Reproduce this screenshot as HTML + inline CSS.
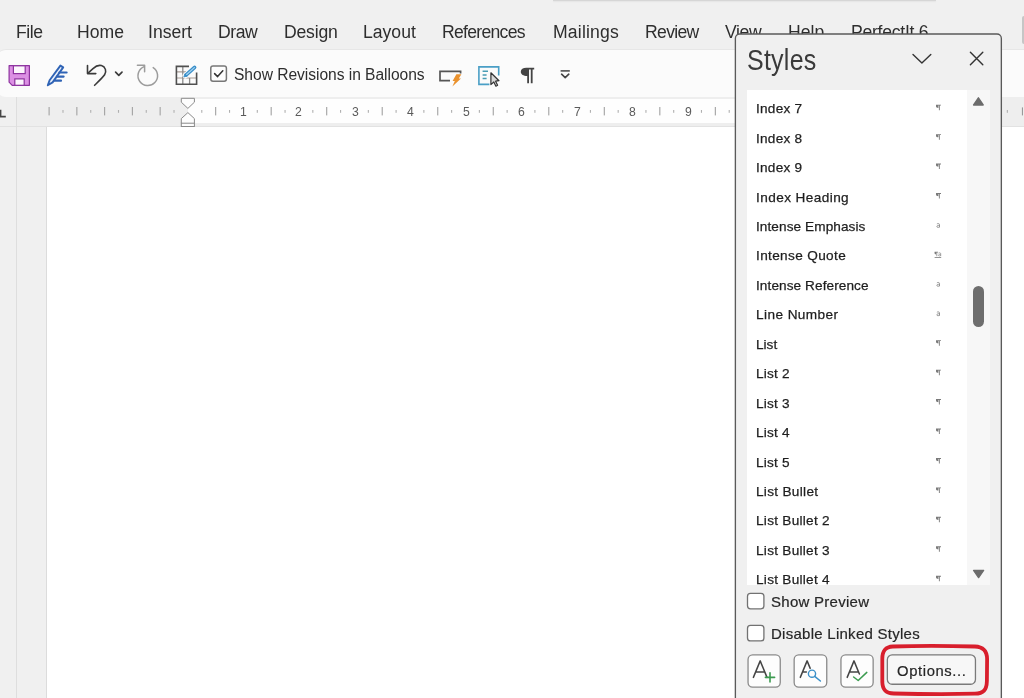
<!DOCTYPE html>
<html lang="en">
<head>
<meta charset="utf-8">
<title>Styles pane</title>
<style>
html,body{margin:0;padding:0;}
body{width:1024px;height:698px;overflow:hidden;background:#f0f0f0;position:relative;font-family:"Liberation Sans",sans-serif;}
.t{position:absolute;white-space:nowrap;line-height:1;will-change:transform;font-family:"Liberation Sans",sans-serif;}
svg.layer{position:absolute;left:0;top:0;width:1024px;height:698px;overflow:hidden;}
#toolbar{position:absolute;box-sizing:border-box;left:-4px;top:49px;width:1034px;height:48px;background:#fbfbfb;border-top:1px solid #e7e7e7;border-radius:10px 0 0 10px;}
#rulergray{position:absolute;left:17px;top:97px;width:1007px;height:29px;background:#eeeeee;}
#rulerwhite{position:absolute;left:187.5px;top:99px;width:800px;height:24px;background:#fefefe;}
#rulerline{position:absolute;left:0;top:125.6px;width:1024px;height:1.2px;background:#e2e2e2;}
#vline{position:absolute;left:16.1px;top:97px;width:1.2px;height:601px;background:#dedede;}
#page{position:absolute;left:46.4px;top:127px;width:978px;height:571px;background:#fff;border-left:1px solid #dcdcdc;}
#topstrip{position:absolute;left:553px;top:0;width:383px;height:1.3px;background:#d6d6d6;box-shadow:0 1px 1.5px rgba(0,0,0,0.06);}
#topbtn{position:absolute;left:1022.3px;top:15.7px;width:4px;height:28.5px;background:#c6c6c6;border-radius:2px;}
#list{position:absolute;left:747px;top:90px;width:243px;height:494.8px;background:#fff;}
#track{position:absolute;left:967px;top:90px;width:23px;height:494.8px;background:#f7f7f7;}
#thumb{position:absolute;left:972.6px;top:286px;width:11.8px;height:40.5px;background:#6e6e6e;border-radius:6px;}
</style>
</head>
<body>
<div id="topstrip"></div>
<div id="topbtn"></div>
<div id="toolbar"></div>
<div id="rulergray"></div>
<div id="rulerwhite"></div>
<div id="rulerline"></div>
<div id="vline"></div>
<div id="page"></div>

<svg class="layer" viewBox="0 0 1024 698">
<!-- ruler ticks -->
<rect x="48.55" y="107" width="1.1" height="8.4" fill="#a2a2a2"/>
<rect x="62.43" y="110" width="1.1" height="2.8" fill="#b0b0b0"/>
<rect x="76.31" y="107" width="1.1" height="8.4" fill="#a2a2a2"/>
<rect x="90.19" y="110" width="1.1" height="2.8" fill="#b0b0b0"/>
<rect x="104.07" y="107" width="1.1" height="8.4" fill="#a2a2a2"/>
<rect x="117.95" y="110" width="1.1" height="2.8" fill="#b0b0b0"/>
<rect x="131.83" y="107" width="1.1" height="8.4" fill="#a2a2a2"/>
<rect x="145.71" y="110" width="1.1" height="2.8" fill="#b0b0b0"/>
<rect x="159.59" y="107" width="1.1" height="8.4" fill="#a2a2a2"/>
<rect x="173.47" y="110" width="1.1" height="2.8" fill="#b0b0b0"/>
<rect x="201.23" y="110" width="1.1" height="2.8" fill="#b0b0b0"/>
<rect x="215.11" y="107" width="1.1" height="8.4" fill="#a2a2a2"/>
<rect x="228.99" y="110" width="1.1" height="2.8" fill="#b0b0b0"/>
<rect x="256.75" y="110" width="1.1" height="2.8" fill="#b0b0b0"/>
<rect x="270.63" y="107" width="1.1" height="8.4" fill="#a2a2a2"/>
<rect x="284.51" y="110" width="1.1" height="2.8" fill="#b0b0b0"/>
<rect x="312.27" y="110" width="1.1" height="2.8" fill="#b0b0b0"/>
<rect x="326.15" y="107" width="1.1" height="8.4" fill="#a2a2a2"/>
<rect x="340.03" y="110" width="1.1" height="2.8" fill="#b0b0b0"/>
<rect x="367.79" y="110" width="1.1" height="2.8" fill="#b0b0b0"/>
<rect x="381.67" y="107" width="1.1" height="8.4" fill="#a2a2a2"/>
<rect x="395.55" y="110" width="1.1" height="2.8" fill="#b0b0b0"/>
<rect x="423.31" y="110" width="1.1" height="2.8" fill="#b0b0b0"/>
<rect x="437.19" y="107" width="1.1" height="8.4" fill="#a2a2a2"/>
<rect x="451.07" y="110" width="1.1" height="2.8" fill="#b0b0b0"/>
<rect x="478.83" y="110" width="1.1" height="2.8" fill="#b0b0b0"/>
<rect x="492.71" y="107" width="1.1" height="8.4" fill="#a2a2a2"/>
<rect x="506.59" y="110" width="1.1" height="2.8" fill="#b0b0b0"/>
<rect x="534.35" y="110" width="1.1" height="2.8" fill="#b0b0b0"/>
<rect x="548.23" y="107" width="1.1" height="8.4" fill="#a2a2a2"/>
<rect x="562.11" y="110" width="1.1" height="2.8" fill="#b0b0b0"/>
<rect x="589.87" y="110" width="1.1" height="2.8" fill="#b0b0b0"/>
<rect x="603.75" y="107" width="1.1" height="8.4" fill="#a2a2a2"/>
<rect x="617.63" y="110" width="1.1" height="2.8" fill="#b0b0b0"/>
<rect x="645.39" y="110" width="1.1" height="2.8" fill="#b0b0b0"/>
<rect x="659.27" y="107" width="1.1" height="8.4" fill="#a2a2a2"/>
<rect x="673.15" y="110" width="1.1" height="2.8" fill="#b0b0b0"/>
<rect x="700.91" y="110" width="1.1" height="2.8" fill="#b0b0b0"/>
<rect x="714.79" y="107" width="1.1" height="8.4" fill="#a2a2a2"/>
<rect x="728.67" y="110" width="1.1" height="2.8" fill="#b0b0b0"/>
<rect x="756.43" y="110" width="1.1" height="2.8" fill="#b0b0b0"/>
<rect x="770.31" y="107" width="1.1" height="8.4" fill="#a2a2a2"/>
<rect x="784.19" y="110" width="1.1" height="2.8" fill="#b0b0b0"/>
<rect x="811.95" y="110" width="1.1" height="2.8" fill="#b0b0b0"/>
<rect x="825.83" y="107" width="1.1" height="8.4" fill="#a2a2a2"/>
<rect x="839.71" y="110" width="1.1" height="2.8" fill="#b0b0b0"/>
<rect x="867.47" y="110" width="1.1" height="2.8" fill="#b0b0b0"/>
<rect x="881.35" y="107" width="1.1" height="8.4" fill="#a2a2a2"/>
<rect x="895.23" y="110" width="1.1" height="2.8" fill="#b0b0b0"/>
<rect x="922.99" y="110" width="1.1" height="2.8" fill="#b0b0b0"/>
<rect x="936.87" y="107" width="1.1" height="8.4" fill="#a2a2a2"/>
<rect x="950.75" y="110" width="1.1" height="2.8" fill="#b0b0b0"/>
<rect x="978.51" y="110" width="1.1" height="2.8" fill="#b0b0b0"/>
<rect x="992.39" y="107" width="1.1" height="8.4" fill="#a2a2a2"/>
<rect x="1006.8" y="110" width="1.1" height="2.8" fill="#b0b0b0"/><rect x="1021.9" y="107.4" width="1.1" height="8" fill="#999"/>
<!-- tab selector L -->
<path d="M0.5 109.8V116.6H5.8" fill="none" stroke="#444" stroke-width="1.8"/>
<!-- indent markers -->
<path d="M181.3 98.3H194.4V102.2L187.9 108.4L181.3 102.2Z" fill="#fdfdfd" stroke="#8a8a8a" stroke-width="1"/>
<path d="M181.3 123.2V118.6L187.9 112.6L194.4 118.6V123.2" fill="#fdfdfd" stroke="#8a8a8a" stroke-width="1"/>
<rect x="181.3" y="123.2" width="13.1" height="3.3" fill="#fdfdfd" stroke="#8a8a8a" stroke-width="1"/>

<!-- save icon -->
<path d="M9.1 65.6H29.4V85.3H12.2L9.1 82.2Z" fill="#dc90e4" stroke="#8d329f" stroke-width="1.2" stroke-linejoin="round"/>
<rect x="13.4" y="65.8" width="11.8" height="7.8" fill="#fcf6fd" stroke="#8d329f" stroke-width="1.2"/>
<rect x="14.8" y="78.9" width="9.4" height="6.4" fill="#fcf6fd" stroke="#8d329f" stroke-width="1.2"/>

<!-- quill pen icon -->
<g fill="none" stroke="#2f63b5" stroke-linecap="round" stroke-linejoin="round">
<path d="M47.8 85.2L49.6 80.2L60.4 65.6L63.2 67.4L52.6 82.4Z" stroke-width="1.9" fill="#e9f0fb"/>
<path d="M59.4 72.5H66.6M57 76.6H63.6M54.6 80.7H61" stroke-width="2.2"/>
</g>

<!-- undo -->
<path d="M87.5 65.6V73.6H95.8" fill="none" stroke="#3b3b3b" stroke-width="1.6" stroke-linecap="round" stroke-linejoin="round"/>
<path d="M88 73.2L93 68.6C95.6 66.2 98.8 64.9 101.4 65.6C105.6 66.8 106.8 71.4 104.6 74.8C103.2 77 99 81 94.6 85.3" fill="none" stroke="#3b3b3b" stroke-width="1.6" stroke-linecap="round"/>
<path d="M115.6 72.2L118.8 75.3L122 72.2" fill="none" stroke="#3b3b3b" stroke-width="1.7" stroke-linecap="round" stroke-linejoin="round"/>

<!-- redo (disabled) -->
<path d="M143.6 66.9A9.8 9.8 0 1 0 153.2 67.6" fill="none" stroke="#9c9c9c" stroke-width="1.5" stroke-linecap="round"/>
<path d="M137.4 65.2H144.6V71.8" fill="none" stroke="#9c9c9c" stroke-width="1.5" stroke-linecap="round" stroke-linejoin="round"/>

<!-- table with pen -->
<g fill="none">
<path d="M176.4 71.8H186M176.4 78H196.6" stroke="#a89c96" stroke-width="1.2"/>
<path d="M182.8 66.4V84.2M189.6 78V84.2" stroke="#8a8a8a" stroke-width="1.3"/>
<path d="M189 66.4H176.4V84.2H196.6V72.4" stroke="#505050" stroke-width="1.6"/>
</g>
<path d="M185.2 75.8L194.8 67.2" fill="none" stroke="#fbfbfb" stroke-width="5.4" stroke-linecap="round"/>
<path d="M186.2 74.9L194.6 67.4" fill="none" stroke="#3b8fc9" stroke-width="3.6" stroke-linecap="round"/>
<path d="M186.6 74.5L194.4 67.6" fill="none" stroke="#a4d4f2" stroke-width="1.2" stroke-linecap="round"/>
<path d="M183.8 77L184.9 73.9L187.2 76Z" fill="#3b8fc9" stroke="#3b8fc9" stroke-width="0.8" stroke-linejoin="round"/>

<!-- checkbox (toolbar) -->
<rect x="210.8" y="65.9" width="15.6" height="15.3" rx="2.2" fill="#fdfdfd" stroke="#777" stroke-width="1.5"/>
<path d="M214.6 73.6L217.6 76.6L222.8 70.8" fill="none" stroke="#333" stroke-width="1.5" stroke-linecap="round" stroke-linejoin="round"/>

<!-- balloon lightning -->
<path d="M450 80.6H440V71.4H460.6V73.4" fill="none" stroke="#555" stroke-width="1.7"/>
<path d="M456.4 74.2H461.4L458.8 78.6H461L452.4 86.4L454.8 80.9H452.6Z" fill="#ea922e"/>

<!-- select objects -->
<path d="M489.4 84.4H478.9V66.9H498.7V75.6" fill="none" stroke="#4a9fc6" stroke-width="1.6"/>
<path d="M482.6 71.3H488M482.6 74.9H486.6M482.6 78.5H486.6" fill="none" stroke="#4a9db5" stroke-width="1.5"/>
<path d="M490.9 72.8V84.6L493.8 82L495.9 86.2L497.6 85.3L495.6 81.2L499 80.7Z" fill="#d8d8d8" stroke="#333" stroke-width="1.2" stroke-linejoin="round"/>

<!-- pilcrow -->
<path d="M534.2 67.8V69.4H532.6V83.2H530.8V69.4H529V83.2H527.2V76C523.4 76 520.8 74.6 520.8 71.8C520.8 69.2 523 67.8 526.4 67.8Z" fill="#444"/>

<!-- customize qat -->
<path d="M560.6 70.9H569.8" fill="none" stroke="#444" stroke-width="1.5"/>
<path d="M561.6 74.2L565.2 77.6L568.8 74.2" fill="none" stroke="#444" stroke-width="1.6" stroke-linecap="round" stroke-linejoin="round"/>
</svg>

<span class="t" style="left:15.60px;top:24.00px;font-size:17.6px;letter-spacing:-0.466px;color:#2e2e2e;">File</span>
<span class="t" style="left:77.00px;top:24.00px;font-size:17.6px;letter-spacing:0.0px;color:#2e2e2e;">Home</span>
<span class="t" style="left:148.00px;top:24.00px;font-size:17.6px;letter-spacing:0.0px;color:#2e2e2e;">Insert</span>
<span class="t" style="left:218.20px;top:24.00px;font-size:17.6px;letter-spacing:-0.433px;color:#2e2e2e;">Draw</span>
<span class="t" style="left:284.10px;top:24.00px;font-size:17.6px;letter-spacing:-0.2px;color:#2e2e2e;">Design</span>
<span class="t" style="left:362.60px;top:24.00px;font-size:17.6px;letter-spacing:0.0px;color:#2e2e2e;">Layout</span>
<span class="t" style="left:441.90px;top:24.00px;font-size:17.6px;letter-spacing:-0.711px;color:#2e2e2e;">References</span>
<span class="t" style="left:552.60px;top:24.00px;font-size:17.6px;letter-spacing:0.186px;color:#2e2e2e;">Mailings</span>
<span class="t" style="left:645.00px;top:24.00px;font-size:17.6px;letter-spacing:-0.68px;color:#2e2e2e;">Review</span>
<span class="t" style="left:725.20px;top:24.00px;font-size:17.6px;letter-spacing:-0.4px;color:#2e2e2e;">View</span>
<span class="t" style="left:788.00px;top:24.00px;font-size:17.6px;letter-spacing:0.0px;color:#2e2e2e;">Help</span>
<span class="t" style="left:851.30px;top:24.00px;font-size:17.6px;letter-spacing:-0.26px;color:#2e2e2e;">PerfectIt 6</span>
<span class="t" style="left:233.90px;top:67.19px;font-size:15.6px;letter-spacing:-0.036px;color:#2e2e2e;">Show Revisions in Balloons</span>
<span class="t" style="left:239.72px;top:106.27px;font-size:12.2px;letter-spacing:0.0px;color:#5a5a5a;">1</span>
<span class="t" style="left:295.24px;top:106.27px;font-size:12.2px;letter-spacing:0.0px;color:#5a5a5a;">2</span>
<span class="t" style="left:351.76px;top:106.27px;font-size:12.2px;letter-spacing:0.0px;color:#5a5a5a;">3</span>
<span class="t" style="left:407.28px;top:106.27px;font-size:12.2px;letter-spacing:0.0px;color:#5a5a5a;">4</span>
<span class="t" style="left:462.80px;top:106.27px;font-size:12.2px;letter-spacing:0.0px;color:#5a5a5a;">5</span>
<span class="t" style="left:518.32px;top:106.27px;font-size:12.2px;letter-spacing:0.0px;color:#5a5a5a;">6</span>
<span class="t" style="left:573.84px;top:106.27px;font-size:12.2px;letter-spacing:0.0px;color:#5a5a5a;">7</span>
<span class="t" style="left:629.36px;top:106.27px;font-size:12.2px;letter-spacing:0.0px;color:#5a5a5a;">8</span>
<span class="t" style="left:684.88px;top:106.27px;font-size:12.2px;letter-spacing:0.0px;color:#5a5a5a;">9</span>

<svg class="layer" viewBox="0 0 1024 698"><rect x="735.38" y="34" width="265.97" height="700" rx="4.4" fill="#f0f0f0" stroke="#5a5a5a" stroke-width="1.35"/></svg>
<div id="list"></div>
<div id="track"></div>
<div id="thumb"></div>

<svg class="layer" viewBox="0 0 1024 698">
<!-- checkboxes & buttons -->
<rect x="747.5" y="593.3" width="16.4" height="15.5" rx="3" fill="#fff" stroke="#727272" stroke-width="1.3"/>
<rect x="747.5" y="625.4" width="16.4" height="15.5" rx="3" fill="#fff" stroke="#727272" stroke-width="1.3"/>
<rect x="748.05" y="654.85" width="32.2" height="32.2" rx="4.6" fill="#fdfdfd" stroke="#8a8a8a" stroke-width="1.3"/>
<rect x="794.15" y="654.85" width="32.6" height="32.2" rx="4.6" fill="#fdfdfd" stroke="#8a8a8a" stroke-width="1.3"/>
<rect x="840.95" y="654.85" width="32.2" height="32.2" rx="4.6" fill="#fdfdfd" stroke="#8a8a8a" stroke-width="1.3"/>
<rect x="887.35" y="654.85" width="88.1" height="29.4" rx="4.8" fill="#f7f7f7" stroke="#7a7a7a" stroke-width="1.3"/>
<!-- chevron / close -->
<path d="M913 54.6L921.9 63L930.8 54.6" fill="none" stroke="#333" stroke-width="1.4" stroke-linecap="round" stroke-linejoin="round"/>
<path d="M970.4 52.2L982.8 64.8M982.8 52.2L970.4 64.8" fill="none" stroke="#333" stroke-width="1.4" stroke-linecap="round"/>
<!-- scroll arrows -->
<path d="M973.6 105L978.4 97.8L983.2 105Z" fill="#6c6c6c" stroke="#6c6c6c" stroke-width="1.4" stroke-linejoin="round"/>
<path d="M973.6 570.4L978.6 577.6L983.6 570.4Z" fill="#6c6c6c" stroke="#6c6c6c" stroke-width="1.4" stroke-linejoin="round"/>
<!-- style type glyphs -->
<path transform="translate(935.8,104.7)" d="M0.2 0h5v0.9h-1.2v4.6h-0.9v-4.6h-0.5v2.3c-1.5 0-2.4-0.6-2.4-1.7z" fill="#7a7a7a"/>
<path transform="translate(935.8,134.14)" d="M0.2 0h5v0.9h-1.2v4.6h-0.9v-4.6h-0.5v2.3c-1.5 0-2.4-0.6-2.4-1.7z" fill="#7a7a7a"/>
<path transform="translate(935.8,163.58)" d="M0.2 0h5v0.9h-1.2v4.6h-0.9v-4.6h-0.5v2.3c-1.5 0-2.4-0.6-2.4-1.7z" fill="#7a7a7a"/>
<path transform="translate(935.8,193.02)" d="M0.2 0h5v0.9h-1.2v4.6h-0.9v-4.6h-0.5v2.3c-1.5 0-2.4-0.6-2.4-1.7z" fill="#7a7a7a"/>
<path transform="translate(936.4,222.76)" d="M0.5 1.2c0.5-0.5 2.6-0.7 2.6 0.6v2.9M3.1 2.6c-1.4 0-2.6 0.1-2.6 1.2c0 1.1 1.9 1.1 2.6 0.1" fill="none" stroke="#858585" stroke-width="0.85"/>
<g transform="translate(934.6,251.8)"><path d="M0 0h3.4v0.8h-0.8v3.6h-0.7v-3.6h-0.4v1.8c-1 0-1.6-0.5-1.6-1.3z" fill="#7a7a7a"/><path d="M3.9 1.3c0.4-0.4 2.2-0.6 2.2 0.5v2.6M6.1 2.5c-1.2 0-2.2 0.1-2.2 1c0 0.9 1.6 0.9 2.2 0.1" fill="none" stroke="#858585" stroke-width="0.7"/><rect x="0" y="5.3" width="6.6" height="0.8" fill="#7a7a7a"/></g>
<path transform="translate(936.4,281.64)" d="M0.5 1.2c0.5-0.5 2.6-0.7 2.6 0.6v2.9M3.1 2.6c-1.4 0-2.6 0.1-2.6 1.2c0 1.1 1.9 1.1 2.6 0.1" fill="none" stroke="#858585" stroke-width="0.85"/>
<path transform="translate(936.4,311.08)" d="M0.5 1.2c0.5-0.5 2.6-0.7 2.6 0.6v2.9M3.1 2.6c-1.4 0-2.6 0.1-2.6 1.2c0 1.1 1.9 1.1 2.6 0.1" fill="none" stroke="#858585" stroke-width="0.85"/>
<path transform="translate(935.8,340.22)" d="M0.2 0h5v0.9h-1.2v4.6h-0.9v-4.6h-0.5v2.3c-1.5 0-2.4-0.6-2.4-1.7z" fill="#7a7a7a"/>
<path transform="translate(935.8,369.66)" d="M0.2 0h5v0.9h-1.2v4.6h-0.9v-4.6h-0.5v2.3c-1.5 0-2.4-0.6-2.4-1.7z" fill="#7a7a7a"/>
<path transform="translate(935.8,399.1)" d="M0.2 0h5v0.9h-1.2v4.6h-0.9v-4.6h-0.5v2.3c-1.5 0-2.4-0.6-2.4-1.7z" fill="#7a7a7a"/>
<path transform="translate(935.8,428.54)" d="M0.2 0h5v0.9h-1.2v4.6h-0.9v-4.6h-0.5v2.3c-1.5 0-2.4-0.6-2.4-1.7z" fill="#7a7a7a"/>
<path transform="translate(935.8,457.98)" d="M0.2 0h5v0.9h-1.2v4.6h-0.9v-4.6h-0.5v2.3c-1.5 0-2.4-0.6-2.4-1.7z" fill="#7a7a7a"/>
<path transform="translate(935.8,487.42)" d="M0.2 0h5v0.9h-1.2v4.6h-0.9v-4.6h-0.5v2.3c-1.5 0-2.4-0.6-2.4-1.7z" fill="#7a7a7a"/>
<path transform="translate(935.8,516.86)" d="M0.2 0h5v0.9h-1.2v4.6h-0.9v-4.6h-0.5v2.3c-1.5 0-2.4-0.6-2.4-1.7z" fill="#7a7a7a"/>
<path transform="translate(935.8,546.3)" d="M0.2 0h5v0.9h-1.2v4.6h-0.9v-4.6h-0.5v2.3c-1.5 0-2.4-0.6-2.4-1.7z" fill="#7a7a7a"/>
<path transform="translate(935.8,575.74)" d="M0.2 0h5v0.9h-1.2v4.6h-0.9v-4.6h-0.5v2.3c-1.5 0-2.4-0.6-2.4-1.7z" fill="#7a7a7a"/>
<!-- A+ -->
<g fill="none" stroke="#444" stroke-width="1.5" stroke-linecap="round" stroke-linejoin="round">
<path d="M753.4 677.4L760.2 660.9L767 677.4M755.8 671.9H764.6"/>
<path d="M800.3 677.4L807.1 660.9L810.2 668.4M802.6 671.9H806.4"/>
<path d="M847.2 677.4L854 660.9L859.4 674M849.6 671.9H858.4"/>
</g>
<path d="M770 672.8V682M765.4 677.4H774.6" fill="none" stroke="#3c9b50" stroke-width="1.6" stroke-linecap="round"/>
<circle cx="812" cy="673.7" r="3.6" fill="none" stroke="#3a8fc8" stroke-width="1.4"/>
<path d="M814.7 676.4L820.4 681" fill="none" stroke="#3a8fc8" stroke-width="1.5" stroke-linecap="round"/>
<path d="M853.6 677L858.2 680.5L866.8 672.4" fill="none" stroke="#3c9b50" stroke-width="1.5" stroke-linecap="round" stroke-linejoin="round"/>
<!-- red highlight -->
<path d="M893 645.6C920 644.8 950 645 975 645.6C983.6 646 987 650 987.2 658L987 680C986.8 689 983.6 692.6 975 692.8C950 693.4 920 693.2 894 692.6C886 692.4 882.6 689 882.4 681L882.4 658C882.4 650 885.4 646 893 645.6Z" fill="none" stroke="#d81e2c" stroke-width="3.8" stroke-linejoin="round" transform="translate(-0.1,0.9)"/>
</svg>

<span class="t" style="left:747.20px;top:48.54px;font-size:25px;letter-spacing:0.24px;color:#3a3a3a;transform:scaleY(1.18);transform-origin:0 84.65%;">Styles</span>
<span class="t" style="left:755.90px;top:101.79px;font-size:13.6px;letter-spacing:0.25px;color:#1e1e1e;-webkit-text-stroke:0.25px #1e1e1e;">Index 7</span>
<span class="t" style="left:755.90px;top:132.23px;font-size:13.6px;letter-spacing:0.25px;color:#1e1e1e;-webkit-text-stroke:0.25px #1e1e1e;">Index 8</span>
<span class="t" style="left:755.90px;top:160.67px;font-size:13.6px;letter-spacing:0.25px;color:#1e1e1e;-webkit-text-stroke:0.25px #1e1e1e;">Index 9</span>
<span class="t" style="left:755.90px;top:191.11px;font-size:13.6px;letter-spacing:0.417px;color:#1e1e1e;-webkit-text-stroke:0.25px #1e1e1e;">Index Heading</span>
<span class="t" style="left:755.90px;top:219.55px;font-size:13.6px;letter-spacing:0.087px;color:#1e1e1e;-webkit-text-stroke:0.25px #1e1e1e;">Intense Emphasis</span>
<span class="t" style="left:755.90px;top:248.99px;font-size:13.6px;letter-spacing:0.358px;color:#1e1e1e;-webkit-text-stroke:0.25px #1e1e1e;">Intense Quote</span>
<span class="t" style="left:755.90px;top:279.43px;font-size:13.6px;letter-spacing:0.088px;color:#1e1e1e;-webkit-text-stroke:0.25px #1e1e1e;">Intense Reference</span>
<span class="t" style="left:755.90px;top:307.87px;font-size:13.6px;letter-spacing:0.43px;color:#1e1e1e;-webkit-text-stroke:0.25px #1e1e1e;">Line Number</span>
<span class="t" style="left:755.90px;top:338.31px;font-size:13.6px;letter-spacing:0.0px;color:#1e1e1e;-webkit-text-stroke:0.25px #1e1e1e;">List</span>
<span class="t" style="left:755.90px;top:366.75px;font-size:13.6px;letter-spacing:0.2px;color:#1e1e1e;-webkit-text-stroke:0.25px #1e1e1e;">List 2</span>
<span class="t" style="left:755.90px;top:397.19px;font-size:13.6px;letter-spacing:0.2px;color:#1e1e1e;-webkit-text-stroke:0.25px #1e1e1e;">List 3</span>
<span class="t" style="left:755.90px;top:425.63px;font-size:13.6px;letter-spacing:0.2px;color:#1e1e1e;-webkit-text-stroke:0.25px #1e1e1e;">List 4</span>
<span class="t" style="left:755.90px;top:456.07px;font-size:13.6px;letter-spacing:0.2px;color:#1e1e1e;-webkit-text-stroke:0.25px #1e1e1e;">List 5</span>
<span class="t" style="left:755.90px;top:484.51px;font-size:13.6px;letter-spacing:0.31px;color:#1e1e1e;-webkit-text-stroke:0.25px #1e1e1e;">List Bullet</span>
<span class="t" style="left:755.90px;top:513.95px;font-size:13.6px;letter-spacing:0.275px;color:#1e1e1e;-webkit-text-stroke:0.25px #1e1e1e;">List Bullet 2</span>
<span class="t" style="left:755.90px;top:544.39px;font-size:13.6px;letter-spacing:0.275px;color:#1e1e1e;-webkit-text-stroke:0.25px #1e1e1e;">List Bullet 3</span>
<span class="t" style="left:755.90px;top:572.83px;font-size:13.6px;letter-spacing:0.275px;color:#1e1e1e;-webkit-text-stroke:0.25px #1e1e1e;">List Bullet 4</span>
<span class="t" style="left:770.90px;top:594.10px;font-size:15px;letter-spacing:0.273px;color:#262626;-webkit-text-stroke:0.2px #262626;">Show Preview</span>
<span class="t" style="left:770.90px;top:626.00px;font-size:15px;letter-spacing:0.265px;color:#262626;-webkit-text-stroke:0.2px #262626;">Disable Linked Styles</span>
<span class="t" style="left:896.60px;top:664.37px;font-size:14.8px;letter-spacing:0.622px;color:#262626;-webkit-text-stroke:0.2px #262626;">Options...</span>
</body>
</html>
